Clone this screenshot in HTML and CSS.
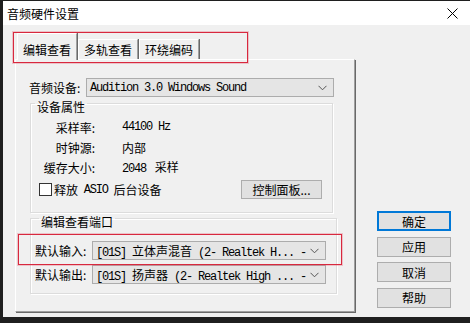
FILE: index.html
```html
<!DOCTYPE html>
<html lang="zh-CN">
<head>
  <meta charset="UTF-8" />
  <title>音频硬件设置</title>
  <link rel="stylesheet" href="styles.css">
</head>
<body>
  <div class="window">
    <div class="titlebar">
      <span>音频硬件设置</span>
      <svg class="close" width="11" height="11" viewBox="0 0 11 11">
        <path d="M0.5 0.5 L10.5 10.5 M10.5 0.5 L0.5 10.5" stroke="#000" stroke-width="1" fill="none" />
      </svg>
    </div>

    <div class="client">
      <div class="tabs-area">
        <div class="tabstrip">
          <div class="tab active">编辑查看</div>
          <div class="tab">多轨查看</div>
          <div class="tab">环绕编码</div>
        </div>

        <div class="panel">
          <!-- 音频设备 -->
          <div class="device-row">
            <span class="device-label">音频设备:</span>
            <div class="combo combo-wide">
              <span class="mono">Audition 3.0 Windows Sound</span>
              <svg class="chev" width="9" height="6" viewBox="0 0 9 6"><path d="M0.5 0.8 L4.5 4.8 L8.5 0.8" stroke="#555" fill="none" /></svg>
            </div>
          </div>

          <!-- 设备属性 -->
          <fieldset class="group group-props">
            <legend>设备属性</legend>
            <div class="props">
              <span class="prop-name">采样率:</span><span class="mono">44100 Hz</span>
              <span class="prop-name">时钟源:</span><span>内部</span>
              <span class="prop-name">缓存大小:</span><span><span class="mono">2048 </span> 采样</span>
            </div>
            <div class="check-row">
              <label class="check"><span class="box"></span>释放 <span class="mono">ASIO</span> 后台设备</label>
              <button class="btn btn-panel">控制面板...</button>
            </div>
          </fieldset>

          <!-- 编辑查看端口 -->
          <fieldset class="group group-ports">
            <legend>编辑查看端口</legend>
            <div class="port-row">
              <span class="port-label">默认输入:</span>
              <div class="combo combo-port">
                <span class="mono">[01S] <span class="cjk">立体声混音</span> (2- Realtek H... -</span>
                <svg class="chev" width="9" height="6" viewBox="0 0 9 6"><path d="M0.5 0.8 L4.5 4.8 L8.5 0.8" stroke="#555" fill="none" /></svg>
              </div>
            </div>
            <div class="port-row">
              <span class="port-label">默认输出:</span>
              <div class="combo combo-port">
                <span class="mono">[01S] <span class="cjk">扬声器</span> (2- Realtek High ... -</span>
                <svg class="chev" width="9" height="6" viewBox="0 0 9 6"><path d="M0.5 0.8 L4.5 4.8 L8.5 0.8" stroke="#555" fill="none" /></svg>
              </div>
            </div>
          </fieldset>
        </div>

        <!-- 红框标注 -->
        <div class="mark mark-tabs"></div>
        <div class="mark mark-input"></div>
      </div>

      <div class="buttons">
        <button class="btn btn-side focused">确定</button>
        <button class="btn btn-side">应用</button>
        <button class="btn btn-side">取消</button>
        <button class="btn btn-side">帮助</button>
      </div>
    </div>
  </div>
</body>
</html>
```

FILE: styles.css
```css
body {
  margin: 0;
  background: #1f1f1f;
  font-family: "Noto Sans CJK SC", sans-serif;
  font-size: 12px;
  color: #000;
  overflow: hidden;
}
.window {
  margin: 1px 0 0 3px;
  width: 467px;
  height: 316px;
  background: #f0f0f0;
  overflow: hidden;
}
.titlebar {
  height: 24px;
  background: #fff;
  display: flex;
  align-items: center;
  justify-content: space-between;
  padding: 0 12px 0 4px;
  line-height: 17px;
}
.close {
  margin-top: 1px;
}
.client {
  display: flex;
  padding: 8px 0 0 12px;
}
.tabs-area {
  position: relative;
  width: 341px;
}
.tabstrip {
  display: flex;
  align-items: flex-end;
  height: 26px;
  padding-left: 2px;
}
.tab {
  line-height: 17px;
  padding: 1px 5px;
  width: 48px;
  text-align: center;
  border-top: 1px solid #fff;
  border-left: 1px solid #fff;
  border-right: 1px solid #a0a0a0;
  box-shadow: 1px 0 0 #696969;
  margin-right: 1px;
  white-space: nowrap;
}
.tab.active {
  position: relative;
  z-index: 1;
  padding: 7px 5px 2px;
  margin-bottom: -1px;
  background: #f0f0f0;
}
.panel {
  width: 325px;
  height: 233px;
  border: 1px solid #fff;
  border-right-color: #a0a0a0;
  border-bottom-color: #a0a0a0;
  box-shadow: 1px 1px 0 #696969;
  padding: 18px 0 0 13px;
}
.device-row {
  display: flex;
  align-items: center;
  height: 19px;
}
.device-label {
  width: 57px;
}
.combo {
  height: 17px;
  border: 1px solid #acacac;
  background: #e5e5e5;
  display: flex;
  align-items: center;
  justify-content: space-between;
  padding: 0 6px 0 3px;
  white-space: nowrap;
  overflow: hidden;
}
.combo-wide {
  width: 237px;
}
.combo-port {
  width: 223px;
}
.chev {
  flex: none;
}
.mono {
  font-family: "Liberation Mono", "Noto Sans CJK SC", monospace;
  font-size: 12px;
  letter-spacing: -1.2px;
  white-space: pre;
}
.cjk {
  font-family: "Noto Sans CJK SC", sans-serif;
  letter-spacing: 0;
}
.group {
  margin: -5px 0 0 1px;
  width: 301px;
  padding: 0;
  border: 1px solid #dcdcdc;
  box-shadow: inset 1px 1px 0 #fff, 1px 1px 0 #fff;
  min-width: 0;
}
.group legend {
  margin-left: 4px;
  padding: 6px 2px 0;
  line-height: 17px;
}
.group-props {
  padding-bottom: 13px;
}
.props {
  display: grid;
  grid-template-columns: 64px auto;
  grid-auto-rows: 20px;
  column-gap: 27px;
  align-items: center;
  margin-top: 2px;
}
.prop-name {
  text-align: right;
}
.check-row {
  display: flex;
  align-items: center;
  justify-content: space-between;
  margin-top: 3px;
  padding: 0 10px 0 8px;
}
.check {
  display: flex;
  align-items: center;
  white-space: pre;
  word-spacing: 3px;
}
.box {
  width: 11px;
  height: 11px;
  border: 1px solid #333;
  background: #fff;
  margin-right: 2px;
}
.btn {
  font-family: "Noto Sans CJK SC", sans-serif;
  font-size: 12px;
  background: #e1e1e1;
  border: 1px solid #adadad;
  padding: 0;
  line-height: 17px;
  color: #000;
}
.btn-panel {
  width: 81px;
  height: 19px;
}
.group-ports {
  margin-top: -6px;
  padding: 0 0 9px 4px;
}
.port-row {
  display: flex;
  align-items: center;
  height: 19px;
}
.port-row:first-of-type {
  margin-top: 11px;
}
.port-row + .port-row {
  margin-top: 5px;
}
.port-label {
  width: 57px;
}
.buttons {
  display: flex;
  flex-direction: column;
  gap: 5.5px;
  margin: 178px 0 0 21px;
}
.btn-side {
  width: 74px;
  height: 20px;
}
.btn-side.focused {
  border: 2px solid #0078d7;
}
.mark {
  position: absolute;
  border: 1px solid #d8283e;
  box-shadow: 0 0 0 1px rgba(230, 90, 110, 0.3);
}
.mark-tabs {
  left: -2px;
  top: -1px;
  width: 233px;
  height: 29px;
}
.mark-input {
  left: 3px;
  top: 201px;
  width: 322px;
  height: 29px;
}
```
